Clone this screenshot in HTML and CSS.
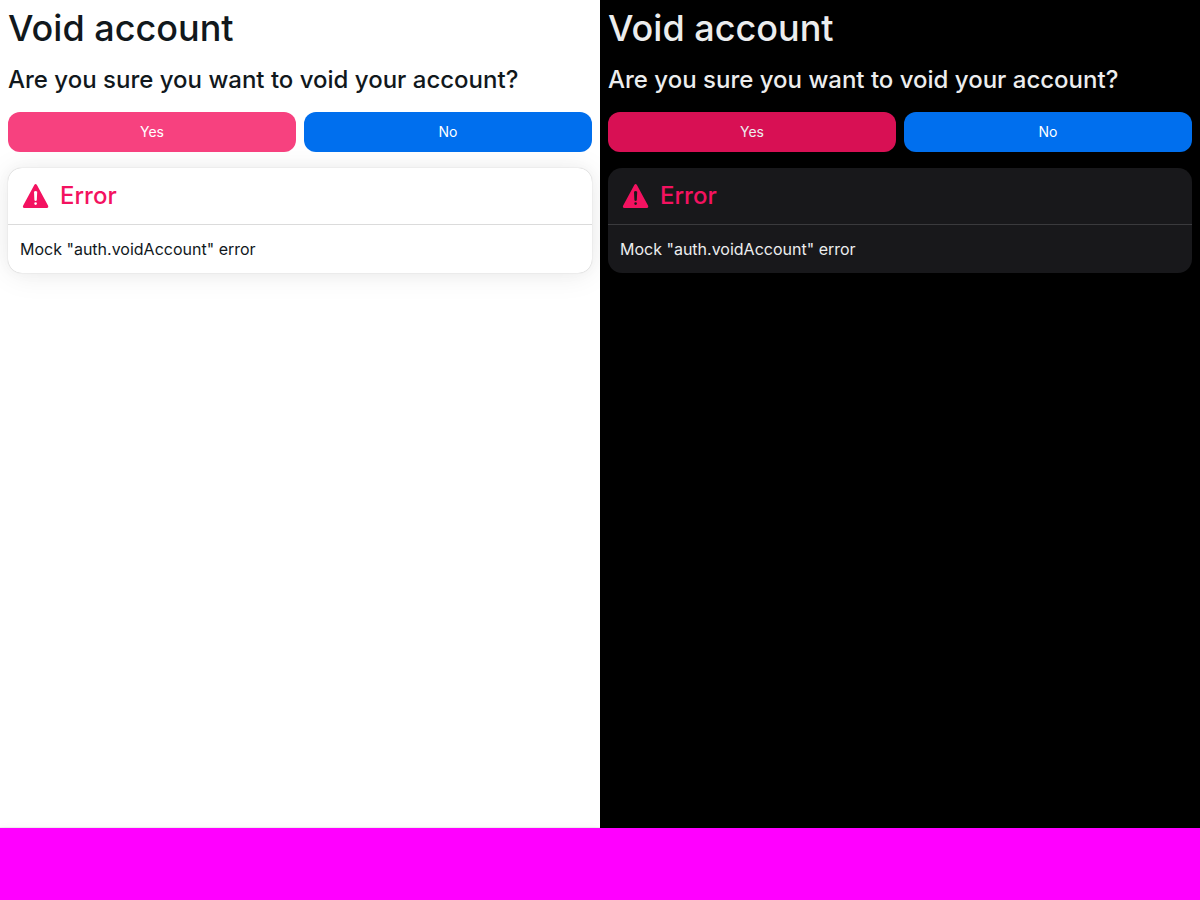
FILE: index.html
```html
<!DOCTYPE html>
<html lang="en">
<head>
<meta charset="utf-8">
<title>Void account</title>
<link rel="stylesheet" href="styles.css">
</head>
<body>
<div class="themes">
  <section class="theme light">
    <div class="panel">
      <h1 class="title">Void account</h1>
      <h2 class="question">Are you sure you want to void your account?</h2>
      <div class="actions">
        <button class="button danger" type="button">Yes</button>
        <button class="button primary" type="button">No</button>
      </div>
      <div class="card">
        <div class="card-header">
          <svg class="icon" viewBox="0 0 24 24" aria-hidden="true"><path fill="currentColor" fill-rule="evenodd" d="M10.7 3.8Q11.7 2.2 12.7 3.8L21 19.1Q21.7 20.9 20.1 21H3.3Q1.6 20.9 2.4 19.1ZM10.5 8.8L10.8 15.2Q11.7 16.2 12.6 15.2L12.9 8.8Q11.7 7.7 10.5 8.8ZM11.7 16.7a1 1 0 1 0 0 2 1 1 0 0 0 0-2Z"/></svg>
          <h3 class="card-title">Error</h3>
        </div>
        <p class="card-body">Mock "auth.voidAccount" error</p>
      </div>
    </div>
    <div class="bar"></div>
  </section>
  <section class="theme dark">
    <div class="panel">
      <h1 class="title">Void account</h1>
      <h2 class="question">Are you sure you want to void your account?</h2>
      <div class="actions">
        <button class="button danger" type="button">Yes</button>
        <button class="button primary" type="button">No</button>
      </div>
      <div class="card">
        <div class="card-header">
          <svg class="icon" viewBox="0 0 24 24" aria-hidden="true"><path fill="currentColor" fill-rule="evenodd" d="M10.7 3.8Q11.7 2.2 12.7 3.8L21 19.1Q21.7 20.9 20.1 21H3.3Q1.6 20.9 2.4 19.1ZM10.5 8.8L10.8 15.2Q11.7 16.2 12.6 15.2L12.9 8.8Q11.7 7.7 10.5 8.8ZM11.7 16.7a1 1 0 1 0 0 2 1 1 0 0 0 0-2Z"/></svg>
          <h3 class="card-title">Error</h3>
        </div>
        <p class="card-body">Mock "auth.voidAccount" error</p>
      </div>
    </div>
    <div class="bar"></div>
  </section>
</div>
</body>
</html>
```
FILE: styles.css
```css
* { box-sizing: border-box; }
body {
  margin: 0;
  font-family: Inter, sans-serif;
  font-size: 16px;
  line-height: 24px;
}
h1, h2, h3, p { margin: 0; }
.themes {
  min-height: 100vh;
  display: grid;
  grid-template-columns: 1fr 1fr;
}
.theme {
  display: flex;
  flex-direction: column;
  overflow: hidden;
  background: var(--page);
  color: var(--text);
}
.panel {
  flex: 1;
  padding: 8px;
}
.bar {
  height: 72px;
  background: #ff00ff;
  box-shadow: var(--bar-shadow);
}
.light {
  --page: #ffffff;
  --text: #11181c;
  --card: #ffffff;
  --line: #dbdbdb;
  --danger: #f7417f;
  --danger-text: #ffffff;
  --shadow: 0 0 15px 0 rgb(0 0 0 / 0.03), 0 2px 30px 0 rgb(0 0 0 / 0.08), 0 0 1px 0 rgb(0 0 0 / 0.3);
  --bar-shadow: 0 0 5px 0 rgb(0 0 0 / 0.02), 0 2px 10px 0 rgb(0 0 0 / 0.06), 0 0 1px 0 rgb(0 0 0 / 0.3);
}
.dark {
  --page: #000000;
  --text: #ecedee;
  --card: #18181b;
  --line: #3a3a3d;
  --danger: #d81054;
  --danger-text: #ecedee;
  --shadow: none;
  --bar-shadow: none;
}
.title {
  margin-bottom: 16px;
  font-size: 36px;
  font-weight: 500;
  line-height: 40px;
}
.question {
  margin-bottom: 16px;
  font-size: 24px;
  font-weight: 500;
  line-height: 32px;
}
.actions {
  display: grid;
  grid-template-columns: 1fr 1fr;
  gap: 8px;
  margin-bottom: 16px;
}
.button {
  height: 40px;
  border: 0;
  border-radius: 12px;
  font-family: inherit;
  font-size: 14px;
  font-weight: 400;
  line-height: 20px;
  color: #ffffff;
}
.danger { background: var(--danger); color: var(--danger-text); }
.primary { background: #006fee; }
.card {
  border-radius: 14px;
  background: var(--card);
  box-shadow: var(--shadow);
}
.card-header {
  display: flex;
  align-items: center;
  gap: 8px;
  padding: 12px;
  border-bottom: 1px solid var(--line);
  color: #f31260;
}
.icon { width: 32px; height: 32px; }
.card-title {
  font-size: 24px;
  font-weight: 500;
  line-height: 32px;
}
.card-body { padding: 12px; }
```
